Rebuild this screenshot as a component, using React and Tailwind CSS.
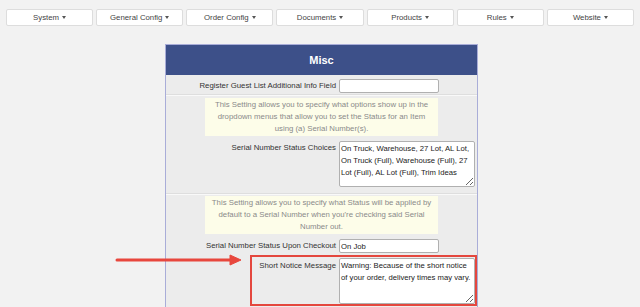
const menus = ['System', 'General Config', 'Order Config', 'Documents', 'Products', 'Rules', 'Website']

function MenuButton({ label }) {
    return (
        <button className="flex-1 h-[17px] bg-white border border-[#dddddd] rounded-[2px] flex items-center justify-center gap-[3px] text-[7.8px] text-[#444444]">
            <span>{label}</span>
            <span className="w-0 h-0 border-l-[2.5px] border-r-[2.5px] border-t-[3px] border-l-transparent border-r-transparent border-t-[#555555]"></span>
        </button>
    )
}

function Note({ children }) {
    return (
        <div className="w-[233px] mx-auto bg-[#fdfde9] text-[#8a8a8a] text-[7.8px] leading-[12px] text-center px-[4px] py-[1px]">
            {children}
        </div>
    )
}

function Label({ children, className = '' }) {
    return (
        <div className={`w-[173px] shrink-0 pr-[3px] text-right text-[7.8px] leading-[12px] text-[#333333] ${className}`}>
            {children}
        </div>
    )
}

export default function App() {
    return (
        <div className="relative min-h-[307px] bg-[#f2f2f2] overflow-hidden" style={{ fontFamily: '"Liberation Sans", Arial, sans-serif' }}>
            {/* Top menu */}
            <div className="flex gap-[3px] px-[6px] pt-[9px]">
                {menus.map((m) => (
                    <MenuButton key={m} label={m} />
                ))}
            </div>

            {/* Settings panel */}
            <div className="ml-[165px] mt-[18px] w-[313px] border border-[#a9add8] bg-[#ececec] pb-6">
                <div className="h-[30px] bg-[#3d5089] flex items-center justify-center text-white font-bold text-[11px]">
                    Misc
                </div>

                {/* Register guest list */}
                <div className="flex pt-[4px] pb-[2px]">
                    <Label className="pt-[1px]">Register Guest List Additional Info Field</Label>
                    <input className="w-[100px] h-[14px] bg-white border border-[#b0b0b0] rounded-[2px] text-[7.7px] px-[1px] outline-none" />
                </div>

                <div className="border-t border-[#f9f9f9] shadow-[0_-1px_0_#dedede]"></div>

                {/* Serial number status choices */}
                <div className="pt-[2px] pb-[7px]">
                    <Note>
                        This Setting allows you to specify what options show up in the dropdown menus that allow you to set the Status for an Item using (a) Serial Number(s).
                    </Note>
                    <div className="flex mt-[5px]">
                        <Label className="pt-[1px]">Serial Number Status Choices</Label>
                        <textarea
                            className="w-[136px] h-[46px] bg-white border border-[#b0b0b0] rounded-[2px] text-[7.7px] leading-[12px] text-[#222222] px-[1px] py-[1px] outline-none"
                            defaultValue="On Truck, Warehouse, 27 Lot, AL Lot, On Truck (Full), Warehouse (Full), 27 Lot (Full), AL Lot (Full), Trim Ideas"
                        />
                    </div>
                </div>

                <div className="border-t border-[#f9f9f9] shadow-[0_-1px_0_#dedede]"></div>

                {/* Status upon checkout */}
                <div className="pt-[1px]">
                    <Note>
                        This Setting allows you to specify what Status will be applied by default to a Serial Number when you're checking said Serial Number out.
                    </Note>
                    <div className="flex mt-[5px]">
                        <Label className="pt-[1px]">Serial Number Status Upon Checkout</Label>
                        <input
                            className="w-[100px] h-[14px] bg-white border border-[#b0b0b0] rounded-[2px] text-[7.7px] text-[#222222] px-[1px] outline-none"
                            defaultValue="On Job"
                        />
                    </div>

                    {/* Short notice message, highlighted */}
                    <div className="ml-[84px] mt-[2px] border-2 border-[#e4473e] flex pt-[1px]">
                        <div className="w-[87px] shrink-0 pr-[3px] pt-[2px] text-right text-[7.8px] leading-[12px] text-[#333333]">
                            Short Notice Message
                        </div>
                        <textarea
                            className="w-[136px] h-[46px] bg-white border border-[#b0b0b0] rounded-[2px] text-[7.7px] leading-[12px] text-[#222222] px-[1px] py-[1px] outline-none"
                            defaultValue="Warning: Because of the short notice of your order, delivery times may vary."
                        />
                    </div>
                </div>
            </div>

            {/* Annotation arrow */}
            <svg className="absolute left-[114px] top-[252px]" width="130" height="16" viewBox="0 0 130 16">
                <line x1="3" y1="8" x2="118" y2="8" stroke="#e8473d" strokeWidth="3" strokeLinecap="round" />
                <path d="M116 3 L127 8 L116 13 Z" fill="#e8473d" stroke="#e8473d" strokeWidth="1" strokeLinejoin="round" />
            </svg>
        </div>
    )
}
